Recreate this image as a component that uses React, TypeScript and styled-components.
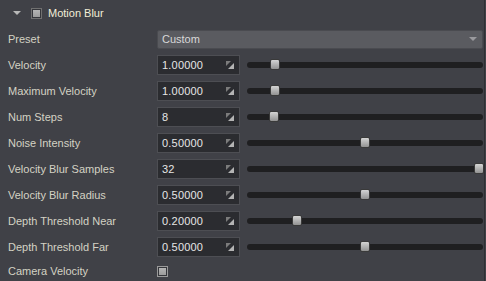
import React from "react";
import styled, { createGlobalStyle } from "styled-components";

const Global = createGlobalStyle`
  html, body { margin: 0; padding: 0; background: #404147; }
  body { font-family: Tahoma, "Liberation Sans", "DejaVu Sans", sans-serif; font-size: 11px; }
`;

const Panel = styled.div`
  width: 485px;
  height: 281px;
  box-sizing: border-box;
  border-right: 1px solid #2f3034;
  background: #404147;
  overflow: hidden;
`;

const Header = styled.div`
  height: 25px;
  display: flex;
  align-items: center;
  padding-left: 13px;
  padding-top: 1px;
  box-sizing: border-box;
`;

const Caret = styled.div`
  width: 0;
  height: 0;
  border-left: 4px solid transparent;
  border-right: 4px solid transparent;
  border-top: 4px solid #b8b8b8;
  margin-right: 10px;
`;

const Check = styled.div<{ $light?: boolean }>`
  width: 11px;
  height: 11px;
  box-sizing: border-box;
  border: 1px solid ${(p) => (p.$light ? "#9a9a9a" : "#707070")};
  background: #35363b;
  display: flex;
  align-items: center;
  justify-content: center;
  &::after {
    content: "";
    width: 7px;
    height: 7px;
    background: linear-gradient(#b4b4b4, #9c9c9c);
  }
`;

const Title = styled.span`
  color: #f2eed8;
  margin-left: 6px;
`;

const Row = styled.div<{ $h?: number }>`
  height: ${(p) => p.$h ?? 26}px;
  display: grid;
  grid-template-columns: 149px 90px 1fr;
  align-items: center;
  padding-left: 8px;
  padding-right: 1px;
`;

const FirstRows = styled.div`
  padding-top: 1px;
`;

const Label = styled.span`
  color: #d4d2c4;
  white-space: nowrap;
`;

const Select = styled.div`
  grid-column: 2 / 4;
  height: 19px;
  box-sizing: border-box;
  background: #5a5b60;
  border: 1px solid #4a4b50;
  border-radius: 2px;
  display: flex;
  align-items: center;
  justify-content: space-between;
  padding: 0 5px 0 4px;
  color: #d8d8d8;
`;

const SelArrow = styled.div`
  width: 0;
  height: 0;
  border-left: 4px solid transparent;
  border-right: 4px solid transparent;
  border-top: 4px solid #9a9a9e;
`;

const Input = styled.div`
  width: 83px;
  height: 20px;
  box-sizing: border-box;
  background: #2b2c30;
  border: 1px solid #4d4e53;
  display: flex;
  align-items: center;
  justify-content: space-between;
  padding: 0 5px 0 4px;
  color: #e6e6e6;
  letter-spacing: 0.2px;
`;

const Track = styled.div`
  position: relative;
  height: 6px;
  border-radius: 3px;
  background: #1f1f21;
`;

const Thumb = styled.div`
  position: absolute;
  top: -3px;
  width: 10px;
  height: 11px;
  box-sizing: border-box;
  border: 1px solid #3a3a3a;
  border-radius: 2px;
  background: linear-gradient(#d4d4d4, #929292);
  transform: translateX(-5px);
`;

const Spin = () => (
  <svg width="8" height="8" viewBox="0 0 8 8">
    <polygon points="0,0 5,0 0,5" fill="#7c7c7c" />
    <polygon points="8,2 8,8 2,8" fill="#b4b4b4" />
  </svg>
);

type Item = { label: string; value: string; pos: number };

const items: Item[] = [
  { label: "Velocity", value: "1.00000", pos: 0.12 },
  { label: "Maximum Velocity", value: "1.00000", pos: 0.12 },
  { label: "Num Steps", value: "8", pos: 0.115 },
  { label: "Noise Intensity", value: "0.50000", pos: 0.5 },
  { label: "Velocity Blur Samples", value: "32", pos: 0.982 },
  { label: "Velocity Blur Radius", value: "0.50000", pos: 0.5 },
  { label: "Depth Threshold Near", value: "0.20000", pos: 0.21 },
  { label: "Depth Threshold Far", value: "0.50000", pos: 0.5 },
];

export default function App() {
  return (
    <>
      <Global />
      <Panel>
        <Header>
          <Caret />
          <Check />
          <Title>Motion Blur</Title>
        </Header>
        <FirstRows>
          <Row>
            <Label>Preset</Label>
            <Select>
              <span>Custom</span>
              <SelArrow />
            </Select>
          </Row>
          {items.map((it) => (
            <Row key={it.label}>
              <Label>{it.label}</Label>
              <Input>
                <span>{it.value}</span>
                <Spin />
              </Input>
              <Track>
                <Thumb style={{ left: `${it.pos * 100}%` }} />
              </Track>
            </Row>
          ))}
          <Row $h={22}>
            <Label>Camera Velocity</Label>
            <Check $light />
          </Row>
        </FirstRows>
      </Panel>
    </>
  );
}
